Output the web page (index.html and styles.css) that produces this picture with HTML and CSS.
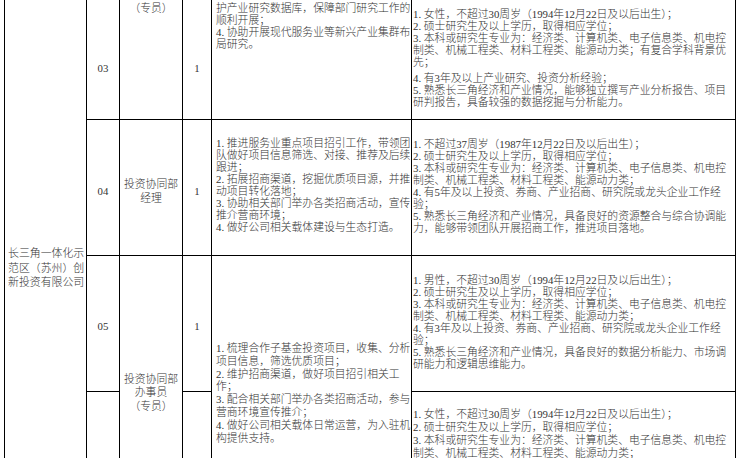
FILE: index.html
```html
<!DOCTYPE html>
<html lang="zh-CN">
<head>
<meta charset="utf-8">
<title>招聘岗位表</title>
<link rel="stylesheet" href="styles.css">
</head>
<body>
<div class="viewport">
<table class="jobs">
<colgroup>
<col class="c-org"><col class="c-no"><col class="c-pos"><col class="c-num"><col class="c-duty"><col class="c-req">
</colgroup>
<tbody>
<tr class="r3">
<td class="org" rowspan="4">长三角一体化示<br>范区（苏州）创<br>新投资有限公司</td>
<td class="ctr n3">03</td>
<td class="ctr pos pos3">（专员）</td>
<td class="ctr n3">1</td>
<td class="txt duty duty3">护产业研究数据库，保障部门研究工作的<br>顺利开展；<br>4. 协助开展现代服务业等新兴产业集群布<br>局研究。</td>
<td class="txt req req3">1. 女性，不超过30周岁（1994年12月22日及以后出生）；<br>2. 硕士研究生及以上学历，取得相应学位；<br>3. 本科或研究生专业为：经济类、计算机类、电子信息类、机电控<br>制类、机械工程类、材料工程类、能源动力类；有复合学科背景优<br>先；<div class="gap">4. 有3年及以上产业研究、投资分析经验；<br>5. 熟悉长三角经济和产业情况，能够独立撰写产业分析报告、项目<br>研判报告，具备较强的数据挖掘与分析能力。</div></td>
</tr>
<tr class="r4">
<td class="ctr n4">04</td>
<td class="ctr pos pos4">投资协同部<br>经理</td>
<td class="ctr n4">1</td>
<td class="txt duty duty4">1. 推进服务业重点项目招引工作，带领团<br>队做好项目信息筛选、对接、推荐及后续<br>跟进；<br>2. 拓展招商渠道，挖掘优质项目源，并推<br>动项目转化落地；<br>3. 协助相关部门举办各类招商活动，宣传<br>推介营商环境；<br>4. 做好公司相关载体建设与生态打造。</td>
<td class="txt req req4">1. 不超过37周岁（1987年12月22日及以后出生）；<br>2. 硕士研究生及以上学历，取得相应学位；<br>3. 本科或研究生专业为：经济类、计算机类、电子信息类、机电控<br>制类、机械工程类、材料工程类、能源动力类；<br>4. 有5年及以上投资、券商、产业招商、研究院或龙头企业工作经<br>验；<br>5. 熟悉长三角经济和产业情况，具备良好的资源整合与综合协调能<br>力，能够带领团队开展招商工作，推进项目落地。</td>
</tr>
<tr class="r5">
<td class="ctr n5">05</td>
<td class="ctr pos pos5" rowspan="2">投资协同部<br>办事员<br>（专员）</td>
<td class="ctr n5">1</td>
<td class="txt duty duty5" rowspan="2">1. 梳理合作子基金投资项目，收集、分析<br>项目信息，筛选优质项目；<br>2. 维护招商渠道，做好项目招引相关工<br>作；<br>3. 配合相关部门举办各类招商活动，参与<br>营商环境宣传推介；<br>4. 做好公司相关载体日常运营，为入驻机<br>构提供支持。</td>
<td class="txt req req5">1. 男性，不超过30周岁（1994年12月22日及以后出生）；<br>2. 硕士研究生及以上学历，取得相应学位；<br>3. 本科或研究生专业为：经济类、计算机类、电子信息类、机电控<br>制类、机械工程类、材料工程类、能源动力类；<br>4. 有3年及以上投资、券商、产业招商、研究院或龙头企业工作经<br>验；<br>5. 熟悉长三角经济和产业情况，具备良好的数据分析能力、市场调<br>研能力和逻辑思维能力。</td>
</tr>
<tr class="r6">
<td class="ctr n6">06</td>
<td class="ctr n6">1</td>
<td class="txt req req6">1. 女性，不超过30周岁（1994年12月22日及以后出生）；<br>2. 硕士研究生及以上学历，取得相应学位；<br>3. 本科或研究生专业为：经济类、计算机类、电子信息类、机电控<br>制类、机械工程类、材料工程类、能源动力类；</td>
</tr>
</tbody>
</table>
</div>
</body>
</html>
```

FILE: styles.css
```css
* { box-sizing: border-box; }
html, body { margin: 0; padding: 0; background: #fff; }
.viewport { width: 739px; height: 458px; overflow: hidden; }

.jobs {
  border-collapse: collapse;
  table-layout: fixed;
  width: 731px;
  margin: -12px 0 0 4px;
  font-family: "Liberation Serif", "Noto Sans CJK SC", serif;
  font-size: 10.8px;
  font-weight: 300;
  color: #333;
}
td {
  padding: 0;
  vertical-align: top;
}
.jobs td { border: 1px solid #000; }

.c-org { width: 82px; }
.c-no { width: 33px; }
.c-pos { width: 63px; }
.c-num { width: 29px; }
.c-duty { width: 200px; }
.c-req { width: 324px; }

.r3 { height: 131px; }
.r4 { height: 136px; }
.r5 { height: 136px; }
.r6 { height: 142px; }

.org {
  font-size: 10.9px;
  line-height: 14.5px;
  padding: 257px 0 0 3px;
  white-space: nowrap;
}

.ctr { text-align: center; line-height: 12px; }
.pos { line-height: 14px; }
.txt { white-space: nowrap; line-height: 12px; }
.duty { padding-left: 4px; }
.req { padding-left: 1px; }

.n3 { padding-top: 73px; }
.n4 { padding-top: 65px; }
.n5 { padding-top: 64px; }
.n6 { padding-top: 65px; }

.pos3 { padding-top: 13px; line-height: 13px; }
.pos4 { padding-top: 57px; }
.pos5 { padding-top: 117px; line-height: 13.25px; }

.duty3 { padding-top: 13px; }
.duty4 { padding-top: 17px; }
.duty5 { padding-top: 86px; line-height: 12.8px; }

.req3 { padding-top: 19px; }
.req3 .gap { margin-top: 4px; }
.req4 { padding-top: 18px; }
.req5 { padding-top: 18px; }
.req6 { padding-top: 16px; line-height: 13.1px; }
```
